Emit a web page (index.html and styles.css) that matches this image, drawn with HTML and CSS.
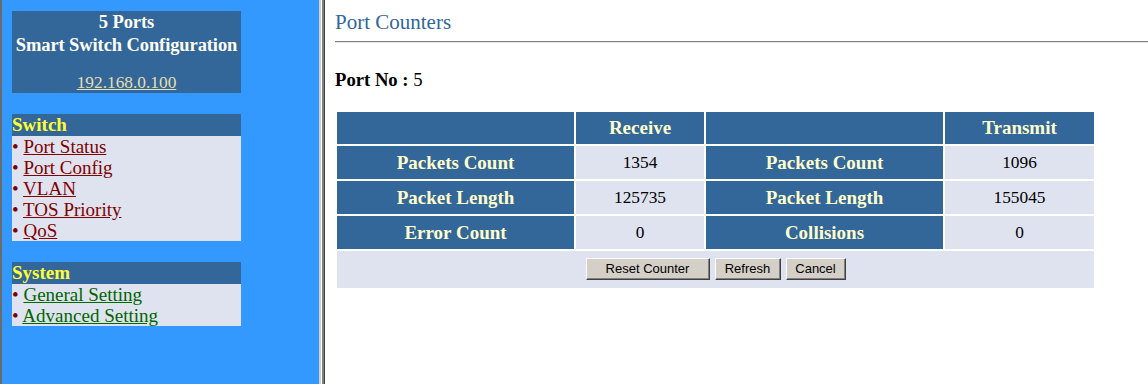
FILE: index.html
```html
<!DOCTYPE html>
<html>
<head>
  <title>Port Counters</title>
  <link rel="stylesheet" href="styles.css">
</head>
<body>

  <div class="nav">
    <div class="brand">
      <div class="brand-title">5 Ports<br>Smart Switch Configuration</div>
      <a class="brand-ip" href="#">192.168.0.100</a>
    </div>

    <div class="menu">
      <div class="menu-head">Switch</div>
      <ul class="menu-list">
        <li><span class="dot">&bull;</span> <a href="#">Port Status</a></li>
        <li><span class="dot">&bull;</span> <a href="#">Port Config</a></li>
        <li><span class="dot">&bull;</span> <a href="#">VLAN</a></li>
        <li><span class="dot">&bull;</span> <a href="#">TOS Priority</a></li>
        <li><span class="dot">&bull;</span> <a href="#">QoS</a></li>
      </ul>
    </div>

    <div class="menu">
      <div class="menu-head">System</div>
      <ul class="menu-list system">
        <li><span class="dot">&bull;</span> <a href="#">General Setting</a></li>
        <li><span class="dot">&bull;</span> <a href="#">Advanced Setting</a></li>
      </ul>
    </div>
  </div>

  <div class="divider"></div>

  <div class="main">
    <h2 class="page-title">Port Counters</h2>
    <hr class="rule">

    <p class="port-no"><b>Port No :</b> 5</p>

    <table class="counters">
      <tr class="head-row">
        <th class="c1"></th>
        <th class="c2">Receive</th>
        <th class="c3"></th>
        <th class="c4">Transmit</th>
      </tr>
      <tr>
        <th>Packets Count</th>
        <td>1354</td>
        <th>Packets Count</th>
        <td>1096</td>
      </tr>
      <tr>
        <th>Packet Length</th>
        <td>125735</td>
        <th>Packet Length</th>
        <td>155045</td>
      </tr>
      <tr>
        <th>Error Count</th>
        <td>0</td>
        <th>Collisions</th>
        <td>0</td>
      </tr>
      <tr class="btn-row">
        <td colspan="4">
          <div class="buttons">
            <button class="btn btn-reset">Reset Counter</button>
            <button class="btn btn-refresh">Refresh</button>
            <button class="btn btn-cancel">Cancel</button>
          </div>
        </td>
      </tr>
    </table>
  </div>

</body>
</html>
```

FILE: styles.css
```css
body {
  margin: 0;
  height: 384px;
  display: flex;
  font-family: "Liberation Serif", "Times New Roman", serif;
  background: #ffffff;
  overflow: hidden;
}

/* left frame */
.nav {
  width: 307px;
  border-left: 2px solid #6b6b6b;
  background: #3399ff;
  padding: 11px 0 0 10px;
}

.brand {
  width: 229px;
  height: 82px;
  background: #336699;
  text-align: center;
}

.brand-title {
  color: #fffff4;
  font-size: 18.5px;
  font-weight: bold;
  line-height: 23px;
  white-space: nowrap;
  letter-spacing: -0.1px;
}

.brand-ip {
  display: inline-block;
  margin-top: 15px;
  color: #e6dfae;
  font-size: 17.33px;
  line-height: 21px;
}

.menu {
  width: 229px;
  margin-top: 21px;
}

.menu-head {
  height: 22px;
  line-height: 22px;
  background: #336699;
  color: #ffff33;
  font-size: 19px;
  font-weight: bold;
}

.menu-list {
  list-style: none;
  margin: 0;
  padding: 0;
  background: #dfe3ef;
}

.menu-list li {
  height: 21px;
  line-height: 21px;
  font-size: 19px;
  white-space: nowrap;
}

.dot {
  color: #800000;
}

.menu-list a {
  color: #800000;
}

.menu-list.system a {
  color: #006600;
}

/* frame border */
.divider {
  width: 3px;
  border-left: 2px solid #d4d0c8;
  border-right: 1px solid #404040;
  background: #808080;
  box-shadow: inset 1px 0 #ffffff;
}

/* right frame */
.main {
  flex: 1;
  padding: 10px 0 0 10px;
}

.page-title {
  margin: 0;
  height: 24px;
  line-height: 24px;
  color: #336699;
  font-size: 21px;
  font-weight: normal;
}

.rule {
  margin: 7px 0 0 0;
  height: 0;
  border: none;
  border-top: 1px solid #808080;
  border-bottom: 1px solid #e8e8e8;
}

.port-no {
  margin: 26px 0 0 0;
  height: 22px;
  line-height: 22px;
  font-size: 18.67px;
}

.counters {
  margin-top: 19px;
  border-spacing: 2px;
}

.counters th,
.counters td {
  padding: 0;
  height: 33px;
  text-align: center;
}

.counters th {
  background: #336699;
  color: #ffffcc;
  font-size: 19px;
}

.counters td {
  background: #dfe3ef;
  color: #000000;
  font-size: 17.33px;
}

.counters .head-row th {
  height: 32px;
}

.c1, .c3 {
  width: 237px;
}

.c2 {
  width: 128px;
}

.c4 {
  width: 149px;
}

.counters .btn-row td {
  height: 37px;
}

.buttons {
  display: flex;
  justify-content: center;
  gap: 5px;
  padding-bottom: 2px;
}

.btn {
  height: 22px;
  padding: 0;
  font-family: "Liberation Sans", Arial, sans-serif;
  font-size: 13px;
  color: #000000;
  background: #d4d0c8;
  border: 1px solid;
  border-color: #ffffff #404040 #404040 #ffffff;
  box-shadow: inset -1px -1px #808080;
}

.btn-reset {
  width: 124px;
}

.btn-refresh {
  width: 66px;
}

.btn-cancel {
  width: 60px;
}
```
